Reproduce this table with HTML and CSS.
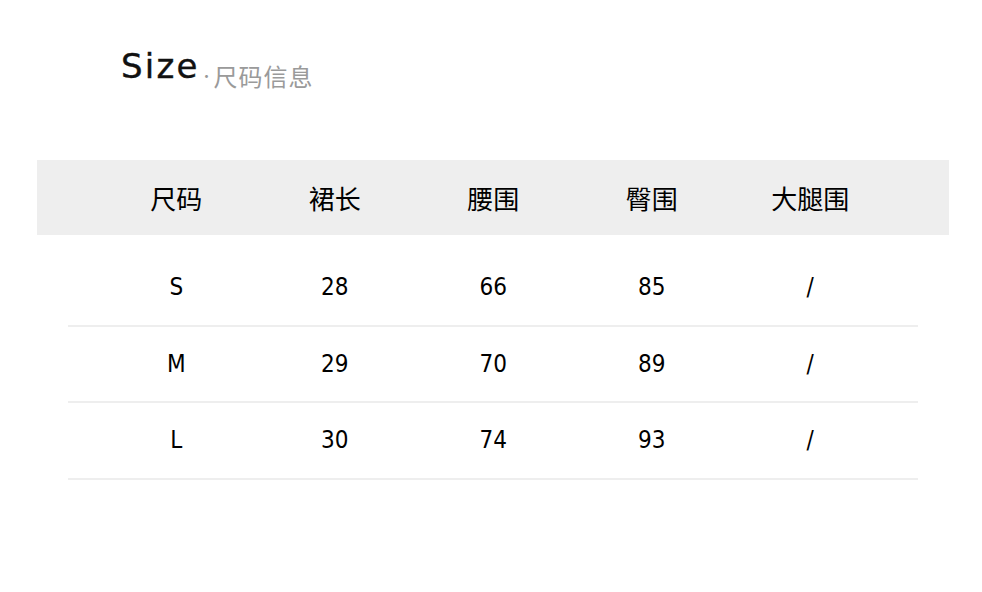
FILE: index.html
```html
<!DOCTYPE html>
<html lang="zh">
<head>
<meta charset="utf-8">
<title>Size 尺码信息</title>
<link rel="stylesheet" href="styles.css">
</head>
<body>
<div class="page">
  <h1 class="title"><span class="title-en">Size</span><span class="title-dot">·</span><span class="title-cn">尺码信息</span></h1>
  <div class="table">
    <div class="thead">
      <div class="cell">尺码</div>
      <div class="cell">裙长</div>
      <div class="cell">腰围</div>
      <div class="cell">臀围</div>
      <div class="cell">大腿围</div>
    </div>
    <div class="tbody">
      <div class="row">
        <div class="cell">S</div><div class="cell">28</div><div class="cell">66</div><div class="cell">85</div><div class="cell">/</div>
      </div>
      <div class="row">
        <div class="cell">M</div><div class="cell">29</div><div class="cell">70</div><div class="cell">89</div><div class="cell">/</div>
      </div>
      <div class="row">
        <div class="cell">L</div><div class="cell">30</div><div class="cell">74</div><div class="cell">93</div><div class="cell">/</div>
      </div>
    </div>
  </div>
</div>
</body>
</html>
```

FILE: styles.css
```css
html, body {
  margin: 0;
  padding: 0;
  background: #ffffff;
}

.page {
  width: 982px;
  height: 592px;
  padding-top: 48px;
  box-sizing: border-box;
}

.title {
  margin: 0 0 0 121px;
  display: flex;
  align-items: flex-end;
  font-weight: normal;
  line-height: 1;
  height: 40px;
}

.title-en {
  font-family: "DejaVu Sans", "Noto Sans", sans-serif;
  font-size: 34px;
  line-height: 34px;
  color: #111111;
  letter-spacing: 2.2px;
  margin-bottom: 5px;
  -webkit-text-stroke: 0.4px #111111;
}

.title-dot {
  font-family: "Noto Sans CJK SC", sans-serif;
  font-size: 14px;
  line-height: 14px;
  color: #999999;
  margin: 0 0 6px 0;
}

.title-cn {
  font-family: "Noto Sans CJK SC", sans-serif;
  font-size: 24px;
  line-height: 24px;
  letter-spacing: 1px;
  color: #9a9a9a;
}

.table {
  margin: 72px 0 0 37px;
  width: 912px;
  font-family: "DejaVu Sans Condensed", "Liberation Sans", "Noto Sans CJK SC", sans-serif;
  color: #000000;
}

.thead {
  display: grid;
  grid-template-columns: repeat(5, 158.5px);
  padding-left: 60px;
  height: 75px;
  align-items: center;
  background: #eeeeee;
  font-family: "Noto Sans CJK SC", sans-serif;
  font-size: 26px;
}

.tbody {
  margin: 15px 31px 0;
}

.row {
  display: grid;
  grid-template-columns: repeat(5, 158.5px);
  padding-left: 29px;
  height: 76.5px;
  box-sizing: border-box;
  align-items: center;
  border-bottom: 2px solid #eeeeee;
  font-size: 24px;
}

.cell {
  text-align: center;
}
```
